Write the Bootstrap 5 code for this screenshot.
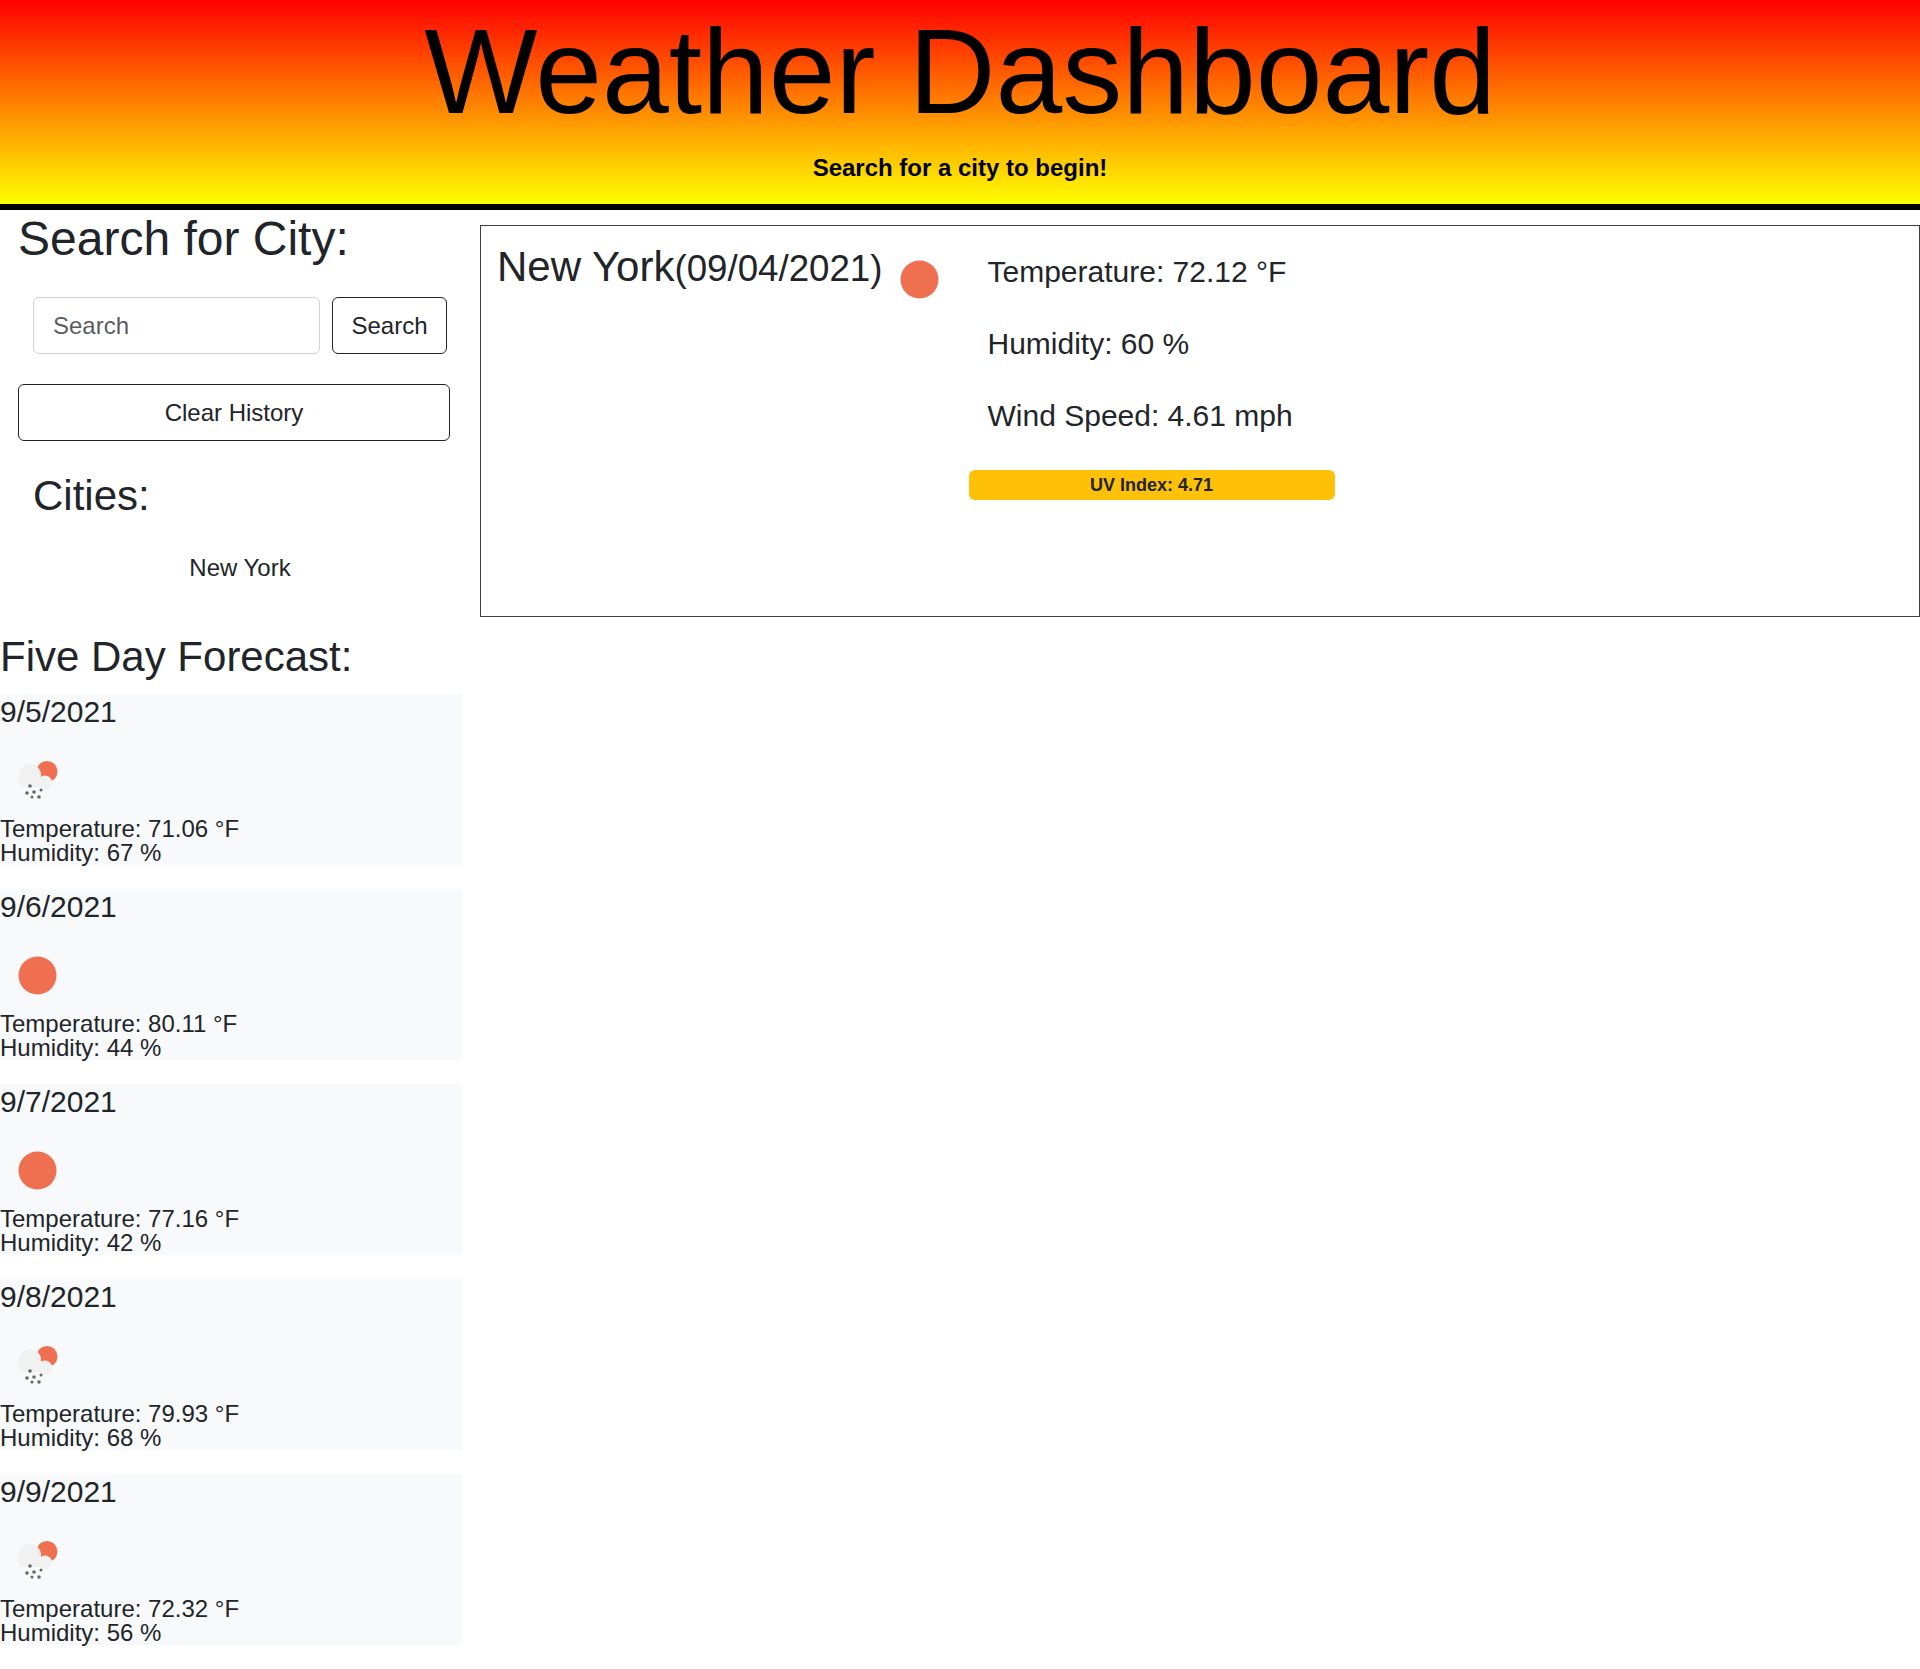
<!DOCTYPE html>
<html lang="en">
<head>
    <meta charset="UTF-8">
    <meta name="viewport" content="width=device-width, initial-scale=1.0">
    <title>Weather Dashboard</title>
    <link href="https://cdn.jsdelivr.net/npm/bootstrap@5.3.0/dist/css/bootstrap.min.css" rel="stylesheet">
    <style>
        body { font-family: "Liberation Sans", Arial, sans-serif; font-size: 24px; color: #212529; }
        .page-head { height: 210px; background: linear-gradient(#ff0000, #ffff00); border-bottom: 6px solid #000; color: #000; }
        .page-head h1 { font-size: 120px; line-height: 143px; margin: 0; }
        .page-head p { font-size: 24px; line-height: 36px; margin: 7px 0 0; }
        .side-title { font-size: 48px; line-height: 57px; margin: 0; padding-left: 18px; }
        .search-row { margin: 30px 0 0 33px; width: 414px; gap: 12px; }
        .search-row .form-control, .search-row .btn, .clear-btn { font-size: 24px; line-height: 36px; padding: 9.5px 18px; border-radius: 6px; }
        .search-row .form-control { border-color: #ced4da; padding-left: 19px; }
        .search-row .btn { width: 115px; flex: none; }
        .clear-btn { display: block; width: 432px; margin: 30px 0 0 18px; }
        .cities-title { font-size: 42px; line-height: 50px; margin: 30px 0 0 33px; }
        .city-item { line-height: 36px; margin-top: 29px; padding-left: 15px; width: 465px; text-align: center; }
        .forecast-title { font-size: 42px; line-height: 50px; margin: 46px 0 12px; }
        .day-box { width: 462px; height: 171px; margin-bottom: 24px; }
        .day-box h5 { font-size: 30px; line-height: 36px; margin: 0 0 13px; }
        .day-box p { line-height: 24px; margin: 0; }
        .wx-icon { display: block; width: 74px; height: 74px; flex: none; }
        .today-box { height: 392px; margin-top: 15px; border: 1px solid #3b3f44; padding: 16px; }
        .today-name { font-size: 42px; line-height: 50px; margin: 0 -1px 0 0; white-space: nowrap; }
        .today-date { font-size: 36.7px; }
        .today-info { margin-left: 13px; padding-top: 12px; width: 366px; }
        .today-info p { font-size: 30px; line-height: 36px; margin: 0 0 36px 19px; white-space: nowrap; }
        .today-info .badge { display: block; font-size: 18px; height: 30px; line-height: 30px; padding: 0; border-radius: 6px; color: #212529 !important; }
    </style>
</head>
<body>
    <!-- shared weather icons -->
    <svg width="0" height="0" class="position-absolute">
        <symbol id="icon-sun" viewBox="0 0 74 74">
            <circle cx="37.5" cy="37.5" r="19" fill="#ef7050"/>
        </symbol>
        <symbol id="icon-rain" viewBox="0 0 74 74">
            <circle cx="47" cy="28.5" r="10.5" fill="#ef7050"/>
            <g fill="#f1f1f1">
                <circle cx="30" cy="32" r="11"/>
                <circle cx="24" cy="37" r="6.5"/>
                <circle cx="45" cy="39.5" r="7"/>
                <rect x="24" y="34" width="21" height="10"/>
            </g>
            <g fill="#666">
                <circle cx="30" cy="43" r="1.8"/>
                <circle cx="34" cy="49" r="1.8"/>
                <circle cx="41" cy="47" r="1.5"/>
                <circle cx="27" cy="50" r="1.8"/>
                <circle cx="32" cy="54" r="1.5"/>
                <circle cx="39" cy="54" r="1.8"/>
            </g>
        </symbol>
    </svg>

    <header class="page-head text-center">
        <h1>Weather Dashboard</h1>
        <p class="fw-bold">Search for a city to begin!</p>
    </header>

    <div class="container-fluid p-0">
        <div class="row g-0">
            <div class="col-3">
                <h2 class="side-title">Search for City:</h2>
                <form class="d-flex search-row">
                    <input type="text" class="form-control" placeholder="Search">
                    <button type="button" class="btn btn-outline-dark">Search</button>
                </form>
                <button type="button" class="btn btn-outline-dark clear-btn">Clear History</button>
                <h3 class="cities-title">Cities:</h3>
                <div class="city-item">New York</div>

                <h3 class="forecast-title">Five Day Forecast:</h3>

                <div class="bg-light day-box">
                    <h5>9/5/2021</h5>
                    <svg class="wx-icon"><use href="#icon-rain"/></svg>
                    <p>Temperature: 71.06 °F</p>
                    <p>Humidity: 67 %</p>
                </div>
                <div class="bg-light day-box">
                    <h5>9/6/2021</h5>
                    <svg class="wx-icon"><use href="#icon-sun"/></svg>
                    <p>Temperature: 80.11 °F</p>
                    <p>Humidity: 44 %</p>
                </div>
                <div class="bg-light day-box">
                    <h5>9/7/2021</h5>
                    <svg class="wx-icon"><use href="#icon-sun"/></svg>
                    <p>Temperature: 77.16 °F</p>
                    <p>Humidity: 42 %</p>
                </div>
                <div class="bg-light day-box">
                    <h5>9/8/2021</h5>
                    <svg class="wx-icon"><use href="#icon-rain"/></svg>
                    <p>Temperature: 79.93 °F</p>
                    <p>Humidity: 68 %</p>
                </div>
                <div class="bg-light day-box">
                    <h5>9/9/2021</h5>
                    <svg class="wx-icon"><use href="#icon-rain"/></svg>
                    <p>Temperature: 72.32 °F</p>
                    <p>Humidity: 56 %</p>
                </div>
            </div>

            <div class="col-9">
                <div class="today-box d-flex align-items-start">
                    <h3 class="today-name">New York<span class="today-date">(09/04/2021)</span></h3>
                    <svg class="wx-icon"><use href="#icon-sun"/></svg>
                    <div class="today-info">
                        <p>Temperature: 72.12 °F</p>
                        <p>Humidity: 60 %</p>
                        <p>Wind Speed: 4.61 mph</p>
                        <span class="badge text-bg-warning">UV Index: 4.71</span>
                    </div>
                </div>
            </div>
        </div>
    </div>
</body>
</html>
